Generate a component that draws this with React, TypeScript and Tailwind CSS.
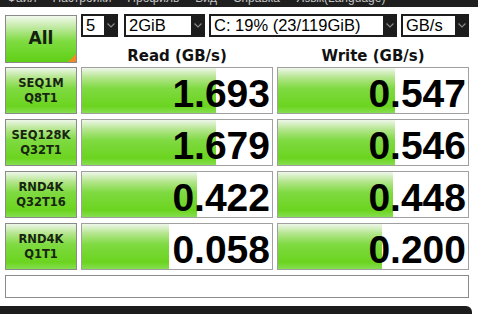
import React from "react";

const MENU = ["Файл", "Настройки", "Профиль", "Вид", "Справка", "Язык(Language)"];

const ROWS = [
  { a: "SEQ1M", b: "Q8T1", read: "1.693", rw: 70.5, write: "0.547", ww: 61.5 },
  { a: "SEQ128K", b: "Q32T1", read: "1.679", rw: 70.3, write: "0.546", ww: 61.5 },
  { a: "RND4K", b: "Q32T16", read: "0.422", rw: 60.7, write: "0.448", ww: 60.5 },
  { a: "RND4K", b: "Q1T1", read: "0.058", rw: 46, write: "0.200", ww: 54.7 },
];

const GREEN =
  "bg-[linear-gradient(to_bottom,#eef7ea_0%,#b2e58a_22%,#7fda42_45%,#6bd41f_85%,#86de50_100%)]";

function Chevron() {
  return (
    <svg width="8" height="5" viewBox="0 0 8 5" className="block">
      <polyline points="0.5,0.5 4,4 7.5,0.5" fill="none" stroke="#8a8a8a" strokeWidth="1.2" />
    </svg>
  );
}

function Combo({ text, w }: { text: string; w: string }) {
  return (
    <div className={`${w} h-[23px] flex bg-[#1c1c1c] p-[2px] pr-0`}>
      <div className="flex-1 bg-white pl-[3px] text-[16.5px] leading-[19px] text-black whitespace-nowrap overflow-hidden font-['Liberation_Sans',Arial,sans-serif]">
        {text}
      </div>
      <div className="w-[14px] flex items-center justify-center">
        <Chevron />
      </div>
    </div>
  );
}

function Cell({ value, pct }: { value: string; pct: number }) {
  return (
    <div className="relative h-[47px] border border-[#a0a0a0] bg-white">
      <div className={`absolute left-0 top-0 bottom-0 ${GREEN}`} style={{ width: `${pct}%` }} />
      <div className="relative h-full flex items-end justify-end pr-[2px] font-['Liberation_Sans',Arial,sans-serif] font-bold text-[39px] leading-[39px] text-black">
        {value}
      </div>
    </div>
  );
}

export default function App() {
  return (
    <div className="relative w-[478px] h-[314px] bg-white overflow-hidden">
      {/* menu bar, only its lower edge shows */}
      <div className="h-[7px] bg-[#1f1f1f] overflow-hidden">
        <div className="-mt-[9px] pl-[7px] flex gap-[16px] text-[12px] leading-[14px] text-[#c4c4c4] font-['Liberation_Sans',Arial,sans-serif] whitespace-nowrap">
          {MENU.map(m => (
            <span key={m}>{m}</span>
          ))}
        </div>
      </div>

      <div className="pl-[5px] pt-[7px]">
        {/* top: All + combos + headers */}
        <div className="flex gap-[4px]">
          <div className="relative mt-[1px] w-[72px] h-[48px] border border-[#8a8a8a] bg-[linear-gradient(to_bottom,#f2f9ee_0%,#bfe9a0_25%,#7edb40_55%,#5fd016_100%)] flex items-center justify-center font-['DejaVu_Sans',sans-serif] font-bold text-[17px] text-[#142010]">
            All
            <div className="absolute right-0 bottom-0 w-0 h-0 border-l-[8px] border-l-transparent border-b-[8px] border-b-[#f08a24]" />
          </div>
          <div className="w-[388px]">
            <div className="flex">
              <Combo text="5" w="w-[37px]" />
              <div className="w-[6px]" />
              <Combo text="2GiB" w="w-[81px]" />
              <div className="w-[4px]" />
              <Combo text="C: 19% (23/119GiB)" w="w-[188px]" />
              <div className="w-[4px]" />
              <Combo text="GB/s" w="w-[68px]" />
            </div>
            <div className="flex gap-[4px] h-[30px] pt-[10px] font-['DejaVu_Sans',sans-serif] font-bold text-[15px] leading-[18px] text-[#111]">
              <div className="w-[192px] text-center">Read (GB/s)</div>
              <div className="w-[192px] text-center">Write (GB/s)</div>
            </div>
          </div>
        </div>

        {/* result rows */}
        <div className="flex flex-col gap-[5px]">
          {ROWS.map((r, i) => (
            <div key={i} className="grid grid-cols-[72px_192px_192px] gap-[4px]">
              <div
                className={`h-[47px] border border-[#8a8a8a] ${GREEN} flex flex-col items-center justify-center font-['DejaVu_Sans',sans-serif] font-bold text-[11.5px] leading-[15px] text-[#17250f]`}
              >
                <span>{r.a}</span>
                <span>{r.b}</span>
              </div>
              <Cell value={r.read} pct={r.rw} />
              <Cell value={r.write} pct={r.ww} />
            </div>
          ))}
        </div>

        {/* comment box */}
        <div className="mt-[5px] w-[464px] h-[23px] border border-[#8a8a8a] bg-white" />
      </div>

      {/* bottom edge of the screen */}
      <div className="absolute left-0 bottom-0 w-[472px] h-[8px] bg-[#1c1c1c] rounded-tr-[6px]" />
    </div>
  );
}
